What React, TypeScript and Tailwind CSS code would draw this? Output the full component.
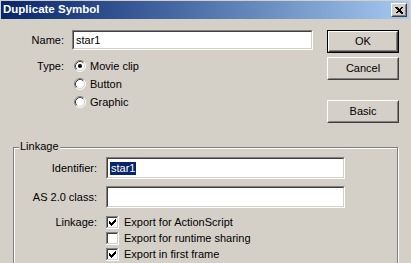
import type { ReactNode } from 'react';

// classic Win2k dialog bits

function Sunken({ className, children }: { className: string; children?: ReactNode }) {
  return (
    <div className={'border border-t-[#808080] border-l-[#808080] border-r-white border-b-white ' + className}>
      <div className="flex h-full items-center border border-t-[#404040] border-l-[#404040] border-r-[#d4d0c8] border-b-[#d4d0c8] bg-white px-[2px] text-[11px] text-black">
        {children}
      </div>
    </div>
  );
}

function Btn({ label, isDefault }: { label: string; isDefault?: boolean }) {
  const inner = (
    <div className="h-full w-full border border-t-white border-l-white border-r-[#404040] border-b-[#404040]">
      <div className="flex h-full w-full items-center justify-center border border-t-[#d4d0c8] border-l-[#d4d0c8] border-r-[#808080] border-b-[#808080] text-[11px] text-black">
        {label}
      </div>
    </div>
  );
  if (isDefault) {
    return <div className="h-[23px] w-[72px] border border-black">{inner}</div>;
  }
  return <div className="h-[23px] w-[72px]">{inner}</div>;
}

function Radio({ checked }: { checked?: boolean }) {
  return (
    <svg width="12" height="12" viewBox="0 0 12 12" className="shrink-0">
      <circle cx="6" cy="6" r="5" fill="#fff" />
      <path d="M2.11 9.89 A5.5 5.5 0 0 1 9.89 2.11" fill="none" stroke="#808080" />
      <path d="M9.89 2.11 A5.5 5.5 0 0 1 2.11 9.89" fill="none" stroke="#fff" />
      <path d="M2.82 9.18 A4.5 4.5 0 0 1 9.18 2.82" fill="none" stroke="#404040" />
      <path d="M9.18 2.82 A4.5 4.5 0 0 1 2.82 9.18" fill="none" stroke="#d4d0c8" />
      {checked && <circle cx="6" cy="6" r="2" fill="#000" />}
    </svg>
  );
}

const CHECK = [
  '......X',
  '.....XX',
  'X...XXX',
  'XX.XXX.',
  'XXXXX..',
  '.XXX...',
  '..X....',
];

function Checkbox({ checked }: { checked?: boolean }) {
  return (
    <svg width="13" height="13" viewBox="0 0 13 13" shapeRendering="crispEdges" className="shrink-0">
      <rect x="0" y="0" width="13" height="13" fill="#fff" />
      <rect x="0" y="0" width="12" height="1" fill="#808080" />
      <rect x="0" y="0" width="1" height="12" fill="#808080" />
      <rect x="1" y="1" width="10" height="1" fill="#404040" />
      <rect x="1" y="1" width="1" height="10" fill="#404040" />
      <rect x="1" y="11" width="11" height="1" fill="#d4d0c8" />
      <rect x="11" y="1" width="1" height="11" fill="#d4d0c8" />
      {checked &&
        CHECK.flatMap((row, y) =>
          row.split('').map((c, x) =>
            c === 'X' ? <rect key={`${x}-${y}`} x={x + 3} y={y + 3} width="1" height="1" fill="#000" /> : null
          )
        )}
    </svg>
  );
}

export default function App() {
  return (
    <div className="h-[263px] w-[411px] overflow-hidden bg-[#d4d0c8] pl-[1px] pr-[2px] pt-[1px] font-['Liberation_Sans',Arial,sans-serif] text-[11px] text-black">
      {/* title bar */}
      <div className="flex h-[18px] items-center justify-between bg-gradient-to-r from-[#0a246a] to-[#a6caf0] pl-[2px] pr-[2px]">
        <span className="text-[11.5px] font-bold leading-none text-white">Duplicate Symbol</span>
        <div className="h-[14px] w-[16px] border border-t-white border-l-white border-r-[#404040] border-b-[#404040] bg-[#d4d0c8]">
          <div className="flex h-full w-full items-center justify-center border border-t-[#d4d0c8] border-l-[#d4d0c8] border-r-[#808080] border-b-[#808080]">
            <svg width="8" height="7" viewBox="0 0 8 7" shapeRendering="crispEdges">
              <path d="M0.5 0 L7 6.5 M1.5 0 L8 6.5 M7 0 L0.5 6.5 M8 0 L1.5 6.5" stroke="#000" strokeWidth="1" />
            </svg>
          </div>
        </div>
      </div>

      {/* top section */}
      <div className="flex pt-[11px]">
        <div className="w-[312px]">
          <div className="flex h-[20px] items-center">
            <div className="w-[63px] text-right">Name:</div>
            <Sunken className="ml-[8px] h-[20px] w-[241px]">star1</Sunken>
          </div>
          <div className="mt-[7px] flex">
            <div className="h-[18px] w-[63px] text-right leading-[18px]">Type:</div>
            <div className="ml-[10px] flex flex-col">
              <div className="flex h-[18px] items-center gap-[4px]">
                <Radio checked />
                <span>Movie clip</span>
              </div>
              <div className="flex h-[18px] items-center gap-[4px]">
                <Radio />
                <span>Button</span>
              </div>
              <div className="flex h-[18px] items-center gap-[4px]">
                <Radio />
                <span>Graphic</span>
              </div>
            </div>
          </div>
        </div>
        <div className="ml-[14px] flex flex-col">
          <Btn label="OK" isDefault />
          <div className="mt-[4px]">
            <Btn label="Cancel" />
          </div>
          <div className="mt-[20px]">
            <Btn label="Basic" />
          </div>
        </div>
      </div>

      {/* linkage group */}
      <div className="relative ml-[12px] mt-[24px] h-[140px] w-[385px] border border-[#808080] pt-[9px] shadow-[inset_1px_1px_0_#fff,1px_1px_0_#fff]">
        <div className="absolute -top-[8px] left-[5px] h-[13px] bg-[#d4d0c8] px-[1px] leading-[13px]">Linkage</div>
        <div className="flex h-[22px] items-center">
          <div className="w-[83px] text-right">Identifier:</div>
          <Sunken className="ml-[9px] h-[22px] w-[239px]">
            <span className="bg-[#0a246a] px-[1px] leading-[13px] text-white">star1</span>
          </Sunken>
        </div>
        <div className="mt-[7px] flex h-[22px] items-center">
          <div className="w-[83px] text-right">AS 2.0 class:</div>
          <Sunken className="ml-[9px] h-[22px] w-[239px]" />
        </div>
        <div className="mt-[6px] flex">
          <div className="h-[16px] w-[83px] text-right leading-[16px]">Linkage:</div>
          <div className="ml-[9px] flex flex-col">
            <div className="flex h-[16px] items-center gap-[5px]">
              <Checkbox checked />
              <span>Export for ActionScript</span>
            </div>
            <div className="flex h-[16px] items-center gap-[5px]">
              <Checkbox />
              <span>Export for runtime sharing</span>
            </div>
            <div className="flex h-[16px] items-center gap-[5px]">
              <Checkbox checked />
              <span>Export in first frame</span>
            </div>
          </div>
        </div>
      </div>
    </div>
  );
}
